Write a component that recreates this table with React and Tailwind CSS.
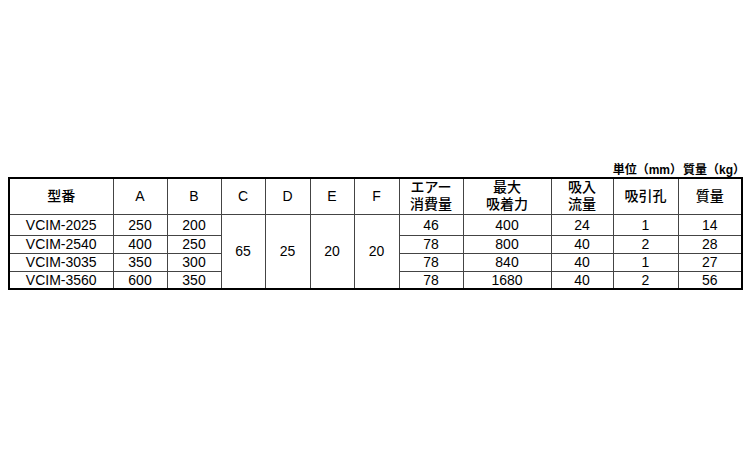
const rows = [
  { model: 'VCIM-2025', a: 250, b: 200, air: 46, force: 400, flow: 24, holes: 1, mass: 14 },
  { model: 'VCIM-2540', a: 400, b: 250, air: 78, force: 800, flow: 40, holes: 2, mass: 28 },
  { model: 'VCIM-3035', a: 350, b: 300, air: 78, force: 840, flow: 40, holes: 1, mass: 27 },
  { model: 'VCIM-3560', a: 600, b: 350, air: 78, force: 1680, flow: 40, holes: 2, mass: 56 },
];

const widths = [104, 54, 54, 44, 45, 44, 45, 64, 88, 62, 65, 64];

const th = 'border border-[#444] font-medium text-center align-middle p-0 leading-[17px]';
const td = 'border border-[#444] text-center align-middle p-0 leading-none';

export default function App() {
  return (
    <div
      className="w-[750px] h-[450px] bg-white text-black text-[14px]"
      style={{ fontFamily: '"Liberation Sans", "Noto Sans CJK JP", sans-serif' }}
    >
      <div className="pt-[160px] pl-[8px] w-[742px] flex flex-col">
        <div className="flex justify-end h-[17px] items-center pt-[2px] text-[12px] font-bold -mr-[3px]">
          <span>単位（mm）</span>
          <span className="ml-[1px]">質量（kg）</span>
        </div>
        <table className="border-collapse border-2 border-black table-fixed w-[734px]">
          <colgroup>
            {widths.map((w, i) => (
              <col key={i} style={{ width: w }} />
            ))}
          </colgroup>
          <thead>
            <tr className="h-[36px]">
              <th className={th}>型番</th>
              <th className={th + ' font-normal'}>A</th>
              <th className={th + ' font-normal'}>B</th>
              <th className={th + ' font-normal'}>C</th>
              <th className={th + ' font-normal'}>D</th>
              <th className={th + ' font-normal'}>E</th>
              <th className={th + ' font-normal'}>F</th>
              <th className={th}>エアー<br />消費量</th>
              <th className={th}>最大<br />吸着力</th>
              <th className={th}>吸入<br />流量</th>
              <th className={th}>吸引孔</th>
              <th className={th}>質量</th>
            </tr>
          </thead>
          <tbody>
            {rows.map((r, i) => (
              <tr key={r.model} className={i === 0 ? 'h-[21px]' : 'h-[18px]'}>
                <td className={td}>{r.model}</td>
                <td className={td}>{r.a}</td>
                <td className={td}>{r.b}</td>
                {i === 0 && (
                  <>
                    <td rowSpan={4} className={td}>65</td>
                    <td rowSpan={4} className={td}>25</td>
                    <td rowSpan={4} className={td}>20</td>
                    <td rowSpan={4} className={td}>20</td>
                  </>
                )}
                <td className={td}>{r.air}</td>
                <td className={td}>{r.force}</td>
                <td className={td}>{r.flow}</td>
                <td className={td}>{r.holes}</td>
                <td className={td}>{r.mass}</td>
              </tr>
            ))}
          </tbody>
        </table>
      </div>
    </div>
  );
}
